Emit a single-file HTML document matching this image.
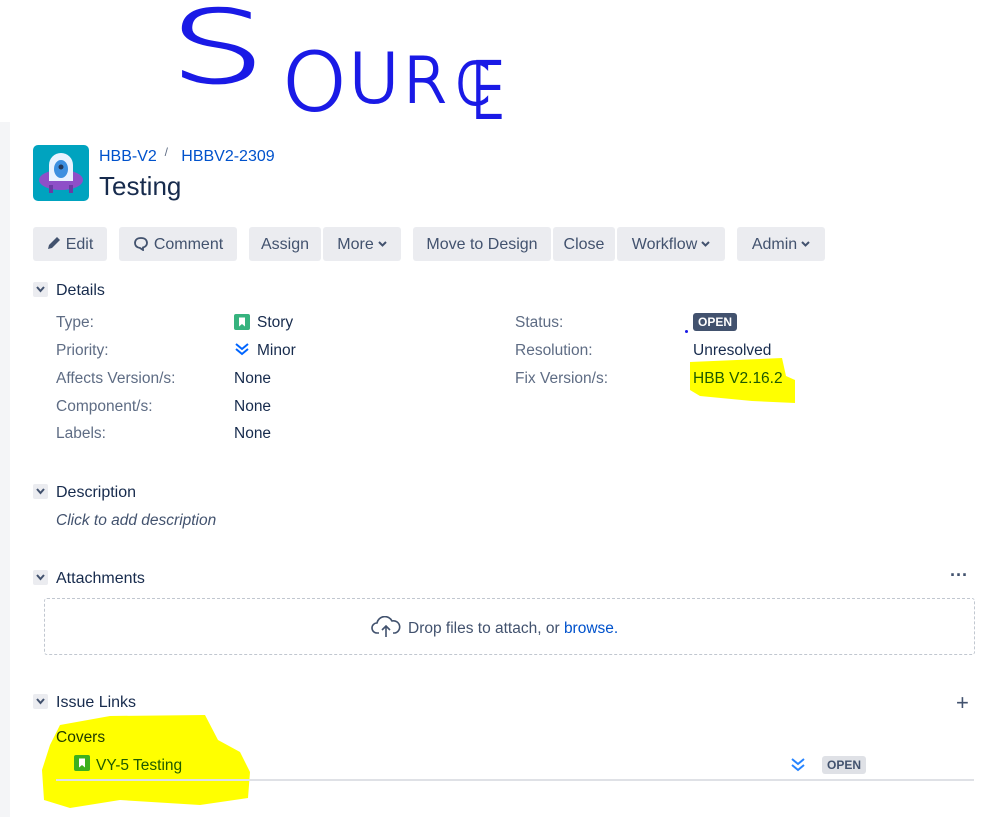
<!DOCTYPE html>
<html><head><meta charset="utf-8"><style>
*{margin:0;padding:0;box-sizing:border-box}
body{width:999px;height:817px;background:#fff;position:relative;overflow:hidden;font-family:"Liberation Sans",sans-serif;color:#172b4d;font-size:15.5px}
.a{position:absolute;white-space:nowrap}
.t{margin-top:2px}
.btn{position:absolute;top:227px;height:34px;background:#ebecf0;border-radius:3px;color:#42526e;font-size:16px;line-height:36px;text-align:center}
.lbl{color:#5e6c84}
.chev{position:absolute;width:15px;height:15px;background:#ebecf0;border-radius:2px}
.chev svg{position:absolute;left:3px;top:4px}
.h{font-size:16px;color:#172b4d}
.badge{position:absolute;background:#42526e;color:#fff;font-weight:bold;font-size:12px;border-radius:3px;padding:0 5px;line-height:18px}
.dd{vertical-align:2px;margin-left:4px}
</style></head><body>
<div class="a" style="left:0;top:122px;width:10px;height:695px;background:#f4f5f7"></div>

<svg class="a" style="left:0;top:0" width="999" height="130">
<g fill="#1a1ae6" stroke="#1a1ae6" stroke-width="2" font-family="DejaVu Sans" font-weight="200">
<text x="170" y="82" font-size="100" textLength="95" lengthAdjust="spacingAndGlyphs">S</text>
<text x="282" y="110" font-size="80" textLength="65" lengthAdjust="spacingAndGlyphs">O</text>
<text x="348" y="102" font-size="68" textLength="52" lengthAdjust="spacingAndGlyphs">U</text>
<text x="403" y="102" font-size="62" textLength="44" lengthAdjust="spacingAndGlyphs">R</text>
<text x="455" y="104" font-size="58" textLength="35" lengthAdjust="spacingAndGlyphs">C</text>
<text x="470" y="118" font-size="78" textLength="36" lengthAdjust="spacingAndGlyphs">E</text>
</g></svg>

<svg class="a" style="left:0;top:0" width="999" height="817">
<path d="M690 362 L782 358 L786 376 L795 380 L795 403 L752 401 L700 396 L690 390 Z" fill="#ffff00"/>
<path d="M60 725 L110 716 L205 715 L218 740 L240 752 L250 772 L248 798 L200 805 L120 800 L70 808 L44 800 L42 770 L50 745 Z" fill="#ffff00"/>
</svg>

<svg class="a" style="left:33px;top:145px" width="56" height="56" viewBox="0 0 56 56">
<rect width="56" height="56" rx="5" fill="#00a3bf"/>
<ellipse cx="28" cy="35" rx="22" ry="10" fill="#8e4fc8"/>
<rect x="16" y="40" width="4" height="8" fill="#6a3aa5"/><rect x="36" y="40" width="4" height="8" fill="#6a3aa5"/>
<path d="M16 36 V20 a12 12 0 0 1 24 0 V36 Z" fill="#e9f2ff"/>
<ellipse cx="28" cy="24" rx="7" ry="9" fill="#3d8fe0"/>
<circle cx="28" cy="22" r="2.5" fill="#253858"/>
</svg>
<div class="a" style="left:99px;top:148px;font-size:16px;color:#0052cc">HBB-V2 <span style="color:#5e6c84;font-size:12px;position:relative;top:-5px">&nbsp;/</span> &nbsp; HBBV2-2309</div>
<div class="a" style="left:99px;top:171px;font-size:26px;color:#172b4d">Testing</div>

<div class="btn" style="left:33px;width:74px"><svg width="14" height="14" viewBox="0 0 14 14" style="vertical-align:-1px;margin-right:5px"><path d="M1 13 L2 9 L10 1 L13 4 L5 12 Z" fill="#42526e"/></svg>Edit</div>
<div class="btn" style="left:119px;width:118px"><svg width="16" height="15" viewBox="0 0 16 15" style="vertical-align:-2px;margin-right:5px"><path d="M8 2 C4 2 2 4 2 7 C2 10 4 11.5 7 12 L10 14 L10 11.5 C12.5 11 14 9 14 7 C14 4 12 2 8 2 Z" fill="none" stroke="#42526e" stroke-width="1.8"/></svg>Comment</div>
<div class="btn" style="left:249px;width:72px">Assign</div>
<div class="btn" style="left:323px;width:78px">More<svg class="dd" width="9" height="6"><path d="M1 1 L4.5 4.5 L8 1" stroke="#42526e" stroke-width="2" fill="none"/></svg></div>
<div class="btn" style="left:413px;width:138px">Move to Design</div>
<div class="btn" style="left:553px;width:62px">Close</div>
<div class="btn" style="left:617px;width:108px">Workflow<svg class="dd" width="9" height="6"><path d="M1 1 L4.5 4.5 L8 1" stroke="#42526e" stroke-width="2" fill="none"/></svg></div>
<div class="btn" style="left:737px;width:88px">Admin<svg class="dd" width="9" height="6"><path d="M1 1 L4.5 4.5 L8 1" stroke="#42526e" stroke-width="2" fill="none"/></svg></div>

<div class="chev" style="left:33px;top:282px"><svg width="9" height="7"><path d="M1 1 L4.5 5 L8 1" stroke="#42526e" stroke-width="2" fill="none"/></svg></div>
<div class="a h t" style="left:56px;top:280px">Details</div>
<div class="a lbl t" style="left:56px;top:312px">Type:</div>
<div class="a lbl t" style="left:56px;top:340px">Priority:</div>
<div class="a lbl t" style="left:56px;top:368px">Affects Version/s:</div>
<div class="a lbl t" style="left:56px;top:396px">Component/s:</div>
<div class="a lbl t" style="left:56px;top:423px">Labels:</div>
<svg class="a" style="left:234px;top:314px" width="16" height="16"><rect width="16" height="16" rx="2" fill="#36b37e"/><path d="M5 3.5 H11 V12.5 L8 10 L5 12.5 Z" fill="#fff"/></svg>
<div class="a t" style="left:257px;top:312px">Story</div>
<svg class="a" style="left:234px;top:341px" width="16" height="16"><path d="M2 3 L8 8 L14 3 M2 8 L8 13 L14 8" stroke="#0065ff" stroke-width="2" fill="none"/></svg>
<div class="a t" style="left:257px;top:340px">Minor</div>
<div class="a t" style="left:234px;top:368px">None</div>
<div class="a t" style="left:234px;top:396px">None</div>
<div class="a t" style="left:234px;top:423px">None</div>

<div class="a lbl t" style="left:515px;top:312px">Status:</div>
<div class="a lbl t" style="left:515px;top:340px">Resolution:</div>
<div class="a lbl t" style="left:515px;top:368px">Fix Version/s:</div>
<div class="a" style="left:685px;top:330px;width:3px;height:3px;border-radius:50%;background:#1a1ae6"></div>
<div class="badge" style="left:693px;top:313px">OPEN</div>
<div class="a t" style="left:693px;top:340px">Unresolved</div>
<div class="a t" style="left:693px;top:368px;color:#1e5a00">HBB V2.16.2</div>

<div class="chev" style="left:33px;top:484px"><svg width="9" height="7"><path d="M1 1 L4.5 5 L8 1" stroke="#42526e" stroke-width="2" fill="none"/></svg></div>
<div class="a h t" style="left:56px;top:482px">Description</div>
<div class="a t" style="left:56px;top:510px;font-style:italic;color:#42526e">Click to add description</div>

<div class="chev" style="left:33px;top:570px"><svg width="9" height="7"><path d="M1 1 L4.5 5 L8 1" stroke="#42526e" stroke-width="2" fill="none"/></svg></div>
<div class="a h t" style="left:56px;top:568px">Attachments</div>
<div class="a" style="left:950px;top:565px;font-size:18px;font-weight:bold;color:#42526e">···</div>
<div class="a" style="left:44px;top:598px;width:931px;height:57px;border:1px dashed #c1c7d0;border-radius:3px"></div>
<svg class="a" style="left:371px;top:616px" width="30" height="22" viewBox="0 0 30 22"><path d="M8 17 H6 a5 5 0 0 1 0-10 a8 8 0 0 1 15-2 a6 6 0 0 1 3 12 H22" fill="none" stroke="#42526e" stroke-width="1.6"/><path d="M15 21 V10 M11 14 L15 10 L19 14" fill="none" stroke="#42526e" stroke-width="1.6"/></svg>
<div class="a t" style="left:408px;top:618px;color:#42526e">Drop files to attach, or <span style="color:#0052cc">browse.</span></div>

<div class="chev" style="left:33px;top:694px"><svg width="9" height="7"><path d="M1 1 L4.5 5 L8 1" stroke="#42526e" stroke-width="2" fill="none"/></svg></div>
<div class="a h t" style="left:56px;top:692px">Issue Links</div>
<div class="a" style="left:956px;top:690px;font-size:22px;color:#42526e">+</div>
<div class="a t" style="left:56px;top:727px;color:#1e3a00">Covers</div>
<svg class="a" style="left:74px;top:755px" width="16" height="16"><rect width="16" height="16" rx="2" fill="#3cb01e"/><path d="M5 3.5 H11 V12.5 L8 10 L5 12.5 Z" fill="#fff"/></svg>
<div class="a t" style="left:96px;top:755px;color:#1e5a00">VY-5 Testing</div>
<svg class="a" style="left:790px;top:756px" width="16" height="18"><path d="M2 3 L8 8 L14 3 M2 9 L8 14 L14 9" stroke="#2684ff" stroke-width="2" fill="none"/></svg>
<div class="badge" style="left:822px;top:756px;background:#dfe1e6;color:#42526e">OPEN</div>
<div class="a" style="left:56px;top:779px;width:918px;height:2px;background:#dfe1e6"></div>
</body></html>
